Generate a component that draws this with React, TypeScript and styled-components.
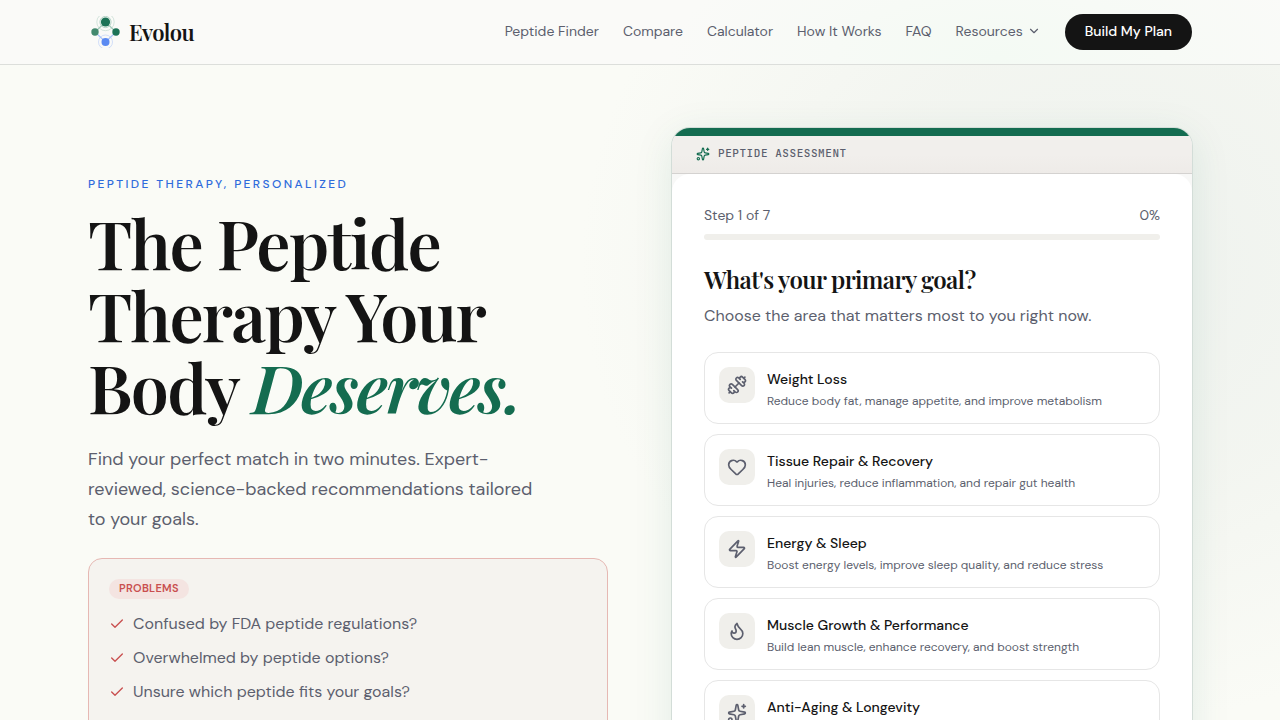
import React from "react";
import styled, { createGlobalStyle } from "styled-components";
import { Check, ChevronDown, Dumbbell, Flame, Heart, Sparkles, Zap } from "lucide-react";
import type { LucideIcon } from "lucide-react";

const sans = `"DM Sans", Inter, "Liberation Sans", sans-serif`;
const serif = `"Playfair Display", "Liberation Serif", serif`;
const mono = `"JetBrains Mono", "Liberation Mono", monospace`;

const ink = "#141414";
const muted = "#5c5f6e";
const green = "#146c50";
const red = "#c94f4f";
const sand = "#f0efeb";

const GlobalStyle = createGlobalStyle`
  *, *::before, *::after { box-sizing: border-box; }
  body {
    margin: 0;
    background: #fafbf6;
    color: ${ink};
    font-family: ${sans};
    font-size: 16px;
    line-height: 24px;
  }
  h1, h2, p, ul { margin: 0; padding: 0; }
  button { font: inherit; color: inherit; cursor: pointer; }
  a { color: inherit; text-decoration: none; }
`;

const Header = styled.header`
  position: sticky;
  top: 0;
  z-index: 10;
  border-bottom: 1px solid #dcdedb;
  background: radial-gradient(ellipse 330px 130px at 78% 90%, #f4faf4, rgba(250, 250, 247, 0)), #fafaf8;
`;

const Container = styled.div`
  max-width: 1152px;
  margin: 0 auto;
  padding: 0 24px;
`;

const HeaderRow = styled(Container)`
  display: flex;
  align-items: center;
  justify-content: space-between;
  height: 64px;
`;

const Brand = styled.a`
  display: flex;
  align-items: center;
  gap: 5px;
  font-family: ${serif};
  font-size: 22px;
  font-weight: 600;
  line-height: 32px;
  letter-spacing: -0.025em;
`;

const Nav = styled.nav`
  display: flex;
  align-items: center;
  gap: 24px;
  font-size: 14px;
  line-height: 20px;
`;

const NavLink = styled.a`
  padding-bottom: 2px;
  color: ${muted};
`;

const NavMenu = styled.button`
  display: flex;
  align-items: center;
  gap: 4px;
  padding: 0 0 2px;
  border: 0;
  background: none;
  color: ${muted};
`;

const PlanButton = styled.button`
  padding: 7px 20px 9px;
  border: 0;
  border-radius: 18px;
  background: ${ink};
  color: #fff;
  font-weight: 500;
`;

const Hero = styled.main`
  background:
    radial-gradient(ellipse 520px 460px at 86% 200px, #eef2ee 0%, rgba(240, 243, 238, 0.7) 50%, rgba(250, 251, 246, 0) 100%),
    #fafbf6;
`;

const HeroGrid = styled(Container)`
  display: grid;
  grid-template-columns: 1fr 1fr;
  gap: 64px;
  align-items: start;
  padding-top: 63px;
  padding-bottom: 64px;
`;

const Intro = styled.section`
  padding-top: 47px;
`;

const Eyebrow = styled.p`
  color: #2f6bdc;
  font-size: 12px;
  font-weight: 500;
  line-height: 18px;
  letter-spacing: 0.2em;
  text-transform: uppercase;
`;

const Title = styled.h1`
  margin-top: 13px;
  font-family: ${serif};
  font-size: 68px;
  font-weight: 600;
  line-height: 72px;
  letter-spacing: -0.025em;

  em { color: ${green}; }
`;

const Lead = styled.p`
  max-width: 460px;
  margin-top: 22px;
  color: ${muted};
  font-size: 18px;
  line-height: 30px;
`;

const Problems = styled.section`
  margin-top: 24px;
  padding: 20px 20px 44px;
  border: 1px solid #e6b8b3;
  border-radius: 14px;
  background: #f5f3ef;
`;

const Tag = styled.p`
  width: fit-content;
  padding: 1px 10px 3px;
  border-radius: 10px;
  background: #f4e4e1;
  color: ${red};
  font-size: 11px;
  font-weight: 600;
  line-height: 16px;
  letter-spacing: 0.025em;
  text-transform: uppercase;
`;

const ProblemList = styled.ul`
  display: grid;
  gap: 10px;
  margin-top: 13px;
  list-style: none;
`;

const Problem = styled.li`
  display: flex;
  align-items: center;
  gap: 8px;
  color: ${muted};

  svg { color: ${red}; }
`;

const Card = styled.section`
  overflow: hidden;
  border-radius: 18px;
  background: #f8f8f7;
  box-shadow: 0 0 0 1px #d3ddd8, 0 8px 40px rgba(20, 108, 80, 0.1);
`;

const CardHeader = styled.header`
  display: flex;
  align-items: center;
  gap: 8px;
  height: 46px;
  padding: 0 24px 2px;
  border-top: 8px solid ${green};
  border-bottom: 1px solid #d4d2d0;
  background: linear-gradient(#f1efec 50%, #eeebe8);
  color: ${muted};
  font-family: ${mono};
  font-size: 11px;
  font-weight: 500;
  line-height: 16px;
  letter-spacing: 0.05em;
  text-transform: uppercase;

  svg { color: ${green}; }
`;

const CardLabel = styled.span`
  padding-bottom: 2px;
`;

const CardBody = styled.div`
  padding: 32px;
  border-radius: 18px;
  background: #fff;
`;

const StepRow = styled.div`
  display: flex;
  justify-content: space-between;
  color: ${muted};
  font-size: 14px;
  line-height: 18px;
`;

const Track = styled.div`
  height: 6px;
  margin-top: 10px;
  border-radius: 3px;
  background: ${sand};
`;

const Question = styled.h2`
  margin-top: 24px;
  font-family: ${serif};
  font-size: 24px;
  font-weight: 600;
  line-height: 30px;
  letter-spacing: -0.025em;
`;

const Hint = styled.p`
  margin-top: 10px;
  color: ${muted};
`;

const Options = styled.div`
  display: grid;
  gap: 10px;
  margin-top: 24px;
`;

const Option = styled.button`
  display: flex;
  align-items: flex-start;
  gap: 12px;
  width: 100%;
  height: 72px;
  padding: 14px;
  border: 1px solid #e6e6e6;
  border-radius: 14px;
  background: #fff;
  text-align: left;
`;

const OptionIcon = styled.span`
  display: grid;
  place-items: center;
  flex: none;
  width: 36px;
  height: 36px;
  border-radius: 10px;
  background: ${sand};
  color: ${muted};
`;

const OptionText = styled.span`
  display: grid;
  gap: 2px;
`;

const OptionTitle = styled.span`
  font-size: 14px;
  font-weight: 500;
  line-height: 24px;
`;

const OptionNote = styled.span`
  color: ${muted};
  font-size: 12px;
  line-height: 16px;
`;

const links = ["Peptide Finder", "Compare", "Calculator", "How It Works", "FAQ"];

const problems = [
  "Confused by FDA peptide regulations?",
  "Overwhelmed by peptide options?",
  "Unsure which peptide fits your goals?",
];

const goals: { icon: LucideIcon; title: string; note?: string }[] = [
  { icon: Dumbbell, title: "Weight Loss", note: "Reduce body fat, manage appetite, and improve metabolism" },
  { icon: Heart, title: "Tissue Repair & Recovery", note: "Heal injuries, reduce inflammation, and repair gut health" },
  { icon: Zap, title: "Energy & Sleep", note: "Boost energy levels, improve sleep quality, and reduce stress" },
  { icon: Flame, title: "Muscle Growth & Performance", note: "Build lean muscle, enhance recovery, and boost strength" },
  { icon: Sparkles, title: "Anti-Aging & Longevity" },
];

const Logo = () => (
  <svg width="36" height="32" viewBox="0 0 36 32" fill="none" aria-hidden="true">
    <g stroke="#a3cabb">
      <path d="M17.5 6 7 16M17.5 6 28 16" strokeWidth="1.2" />
      <circle cx="17.5" cy="6" r="8.7" opacity="0.45" />
      <circle cx="17.5" cy="6" r="5.6" opacity="0.8" />
    </g>
    <g stroke="#a9c3fa">
      <path d="M7 16l10.5 10M28 16 17.5 26" strokeWidth="1.2" />
      <circle cx="17.5" cy="26" r="7" opacity="0.5" />
    </g>
    <circle cx="17.5" cy="6" r="4.6" fill="#1c7357" />
    <circle cx="7" cy="16" r="3.7" fill="#43896f" />
    <circle cx="28" cy="16" r="3.7" fill="#1c7357" />
    <circle cx="17.5" cy="26" r="4" fill="#5b8af2" />
  </svg>
);

export default function App() {
  return (
    <>
      <GlobalStyle />
      <Header>
        <HeaderRow>
          <Brand href="#">
            <Logo />
            Evolou
          </Brand>
          <Nav aria-label="Main">
            {links.map((label) => (
              <NavLink key={label} href="#">{label}</NavLink>
            ))}
            <NavMenu type="button">
              Resources
              <ChevronDown size={14} />
            </NavMenu>
            <PlanButton type="button">Build My Plan</PlanButton>
          </Nav>
        </HeaderRow>
      </Header>
      <Hero>
        <HeroGrid>
          <Intro>
            <Eyebrow>Peptide therapy, personalized</Eyebrow>
            <Title>
              The Peptide Therapy Your Body <em>Deserves.</em>
            </Title>
            <Lead>
              Find your perfect match in two minutes. Expert-reviewed, science-backed
              recommendations tailored to your goals.
            </Lead>
            <Problems>
              <Tag>Problems</Tag>
              <ProblemList>
                {problems.map((text) => (
                  <Problem key={text}>
                    <Check size={16} />
                    {text}
                  </Problem>
                ))}
              </ProblemList>
            </Problems>
          </Intro>
          <Card>
            <CardHeader>
              <Sparkles size={14} />
              <CardLabel>Peptide assessment</CardLabel>
            </CardHeader>
            <CardBody>
              <StepRow>
                <span>Step 1 of 7</span>
                <span>0%</span>
              </StepRow>
              <Track role="progressbar" aria-label="Progress" aria-valuenow={0} aria-valuemin={0} aria-valuemax={100} />
              <Question>What's your primary goal?</Question>
              <Hint>Choose the area that matters most to you right now.</Hint>
              <Options>
                {goals.map(({ icon: Icon, title, note }) => (
                  <Option key={title} type="button">
                    <OptionIcon>
                      <Icon size={20} />
                    </OptionIcon>
                    <OptionText>
                      <OptionTitle>{title}</OptionTitle>
                      {note && <OptionNote>{note}</OptionNote>}
                    </OptionText>
                  </Option>
                ))}
              </Options>
            </CardBody>
          </Card>
        </HeroGrid>
      </Hero>
    </>
  );
}
